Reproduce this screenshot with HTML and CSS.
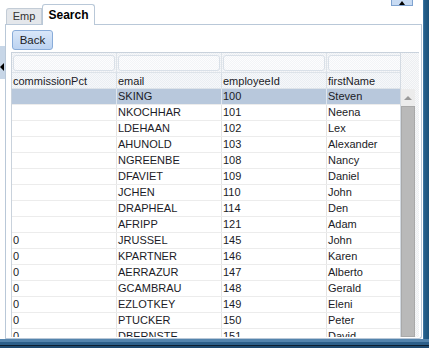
FILE: index.html
```html
<!DOCTYPE html>
<html>
<head>
<meta charset="utf-8">
<link rel="stylesheet" href="styles.css">
</head>
<body>
<div class="screen">
  <div class="top">
    <div class="main">
      <div class="collapse-top"><span class="tri-up"></span></div>
      <div class="collapse-left"><span class="tri-left"></span></div>
      <div class="tabbar">
        <div class="tab">Emp</div>
        <div class="tab active">Search</div>
      </div>
      <div class="panel">
        <button class="back">Back</button>
        <div class="grid">
          <div class="grid-body">
            <div class="row filter">
              <div class="cell"><div class="finput"></div></div>
              <div class="cell"><div class="finput"></div></div>
              <div class="cell"><div class="finput"></div></div>
              <div class="cell"><div class="finput"></div></div>
            </div>
            <div class="row header">
              <div class="cell">commissionPct</div>
              <div class="cell">email</div>
              <div class="cell">employeeId</div>
              <div class="cell">firstName</div>
            </div>
            <div class="row selected"><div class="cell"></div><div class="cell">SKING</div><div class="cell">100</div><div class="cell">Steven</div></div>
            <div class="row"><div class="cell"></div><div class="cell">NKOCHHAR</div><div class="cell">101</div><div class="cell">Neena</div></div>
            <div class="row"><div class="cell"></div><div class="cell">LDEHAAN</div><div class="cell">102</div><div class="cell">Lex</div></div>
            <div class="row"><div class="cell"></div><div class="cell">AHUNOLD</div><div class="cell">103</div><div class="cell">Alexander</div></div>
            <div class="row"><div class="cell"></div><div class="cell">NGREENBE</div><div class="cell">108</div><div class="cell">Nancy</div></div>
            <div class="row"><div class="cell"></div><div class="cell">DFAVIET</div><div class="cell">109</div><div class="cell">Daniel</div></div>
            <div class="row"><div class="cell"></div><div class="cell">JCHEN</div><div class="cell">110</div><div class="cell">John</div></div>
            <div class="row"><div class="cell"></div><div class="cell">DRAPHEAL</div><div class="cell">114</div><div class="cell">Den</div></div>
            <div class="row"><div class="cell"></div><div class="cell">AFRIPP</div><div class="cell">121</div><div class="cell">Adam</div></div>
            <div class="row"><div class="cell">0</div><div class="cell">JRUSSEL</div><div class="cell">145</div><div class="cell">John</div></div>
            <div class="row"><div class="cell">0</div><div class="cell">KPARTNER</div><div class="cell">146</div><div class="cell">Karen</div></div>
            <div class="row"><div class="cell">0</div><div class="cell">AERRAZUR</div><div class="cell">147</div><div class="cell">Alberto</div></div>
            <div class="row"><div class="cell">0</div><div class="cell">GCAMBRAU</div><div class="cell">148</div><div class="cell">Gerald</div></div>
            <div class="row"><div class="cell">0</div><div class="cell">EZLOTKEY</div><div class="cell">149</div><div class="cell">Eleni</div></div>
            <div class="row"><div class="cell">0</div><div class="cell">PTUCKER</div><div class="cell">150</div><div class="cell">Peter</div></div>
            <div class="row"><div class="cell">0</div><div class="cell">DBERNSTE</div><div class="cell">151</div><div class="cell">David</div></div>
          </div>
          <div class="vscroll">
            <div class="vs-head"></div>
            <div class="vs-arrow"><span class="vs-tri"></span></div>
            <div class="vs-thumb"></div>
          </div>
        </div>
      </div>
    </div>
    <div class="frame-right"></div>
  </div>
  <div class="frame-bottom"></div>
</div>
</body>
</html>
```
FILE: styles.css
```css
html, body {
  margin: 0;
  padding: 0;
  height: 100%;
  overflow: hidden;
  background: #ffffff;
}
body {
  font-family: "Liberation Sans", Arial, sans-serif;
  font-size: 11px;
  color: #1b1b26;
}
.screen {
  width: 429px;
  height: 348px;
  display: flex;
  flex-direction: column;
}
.top {
  display: flex;
  height: 339px;
}
.main {
  position: relative;
  width: 423px;
  display: flex;
  flex-direction: column;
}
.frame-right {
  width: 6px;
  background: linear-gradient(to right, #3a74a0 0 1px, #24608c 1px, #1b5078);
}
.frame-bottom {
  height: 9px;
  background: linear-gradient(#5484ad 0 3px, #2c5f8a 3px 6px, #0d1f30 6px 7px, #1f4a70 7px);
}

/* collapse handles */
.collapse-top {
  position: absolute;
  left: 391px;
  top: 0;
  width: 22px;
  height: 6px;
  box-sizing: border-box;
  background: #c8dbf3;
  border: 1px solid #7fa3d0;
  border-top: none;
  display: flex;
  justify-content: center;
  align-items: center;
}
.tri-up {
  width: 0;
  height: 0;
  border-left: 3px solid transparent;
  border-right: 3px solid transparent;
  border-bottom: 4px solid #000;
}
.collapse-left {
  position: absolute;
  left: 0;
  top: 46px;
  width: 5px;
  height: 33px;
  background: #c7d6e7;
  display: flex;
  align-items: center;
  justify-content: flex-start;
  padding-top: 9px;
  box-sizing: border-box;
}
.tri-left {
  width: 0;
  height: 0;
  border-top: 4px solid transparent;
  border-bottom: 4px solid transparent;
  border-right: 4px solid #000;
}

/* tabs */
.tabbar {
  height: 24px;
  margin-left: 5px;
  margin-right: 1px;
  border-bottom: 1px solid #b9c8d8;
  border-top-right-radius: 3px;
  display: flex;
  align-items: flex-end;
  padding-left: 1px;
}
.tab {
  box-sizing: border-box;
  width: 36px;
  height: 16px;
  line-height: 15px;
  text-align: center;
  background: #e4e7eb;
  border: 1px solid #c3ccd6;
  border-bottom: none;
  border-top-left-radius: 3px;
  color: #333;
}
.tab.active {
  width: 53px;
  height: 21px;
  line-height: 20px;
  margin-bottom: -1px;
  background: #ffffff;
  border-color: #b9c8d8;
  border-radius: 3px 3px 0 0;
  font-weight: bold;
  font-size: 12px;
  color: #000;
  position: relative;
}

/* panel */
.panel {
  flex: 1;
  min-height: 0;
  margin-left: 5px;
  margin-right: 1px;
  border: 1px solid #b9c8d8;
  border-top: none;
  border-bottom-right-radius: 3px;
  padding: 5px 0 1px 5px;
  display: flex;
  flex-direction: column;
  align-items: flex-start;
}
.back {
  box-sizing: border-box;
  width: 41px;
  height: 20px;
  margin: 0 0 0 1px;
  padding: 0;
  border: 1px solid #89acd9;
  border-radius: 3px;
  background: linear-gradient(#d9e7f9, #bcd3f1);
  font-family: "Liberation Sans", Arial, sans-serif;
  font-size: 11.5px;
  color: #1c1c1c;
  text-align: center;
}
.grid {
  margin-top: 2px;
  width: 408px;
  flex: 1;
  min-height: 0;
  overflow: hidden;
  border-left: 1px solid #c9d2dc;
  border-top: 1px solid #c9d2dc;
  box-sizing: border-box;
  display: flex;
}
.grid-body {
  width: 388px;
  overflow: hidden;
  flex: none;
}
.row {
  display: flex;
  height: 16px;
  box-sizing: border-box;
  border-bottom: 1px solid #ececec;
  width: 420px;
}
.cell {
  flex: 0 0 105px;
  box-sizing: border-box;
  border-right: 1px solid #e4e4e4;
  padding-left: 1px;
  line-height: 15px;
  white-space: nowrap;
  overflow: hidden;
}
.row.filter {
  height: 20px;
  border-bottom: 1px solid #dde3e9;
  background: repeating-conic-gradient(#eceff3 0 25%, #f7f8fa 0 50%) 0 0 / 2px 2px;
}
.row.filter .cell {
  border-right-color: #dde3e9;
  padding: 2px 1px 0 1px;
}
.finput {
  height: 16px;
  box-sizing: border-box;
  border: 1px solid #d9e0e8;
  border-radius: 3px;
  background: repeating-conic-gradient(#f2f4f7 0 25%, #fdfdfe 0 50%) 0 0 / 2px 2px;
}
.row.header {
  background: repeating-conic-gradient(#eaeef3 0 25%, #f6f8fa 0 50%) 0 0 / 2px 2px;
  border-bottom-color: #dde3e9;
}
.row.header .cell {
  border-right-color: #d7dee6;
  line-height: 17px;
}
.row.selected {
  background: #b8c8dc;
}
.row.selected .cell {
  border-right-color: #dfe6ee;
}

/* scrollbar */
.vscroll {
  flex: none;
  width: 19px;
  box-sizing: border-box;
  border-left: 1px solid #d3dae2;
  background: repeating-conic-gradient(#eceef1 0 25%, #f8f9fa 0 50%) 0 0 / 2px 2px;
  display: flex;
  flex-direction: column;
}
.vs-head {
  height: 36px;
  flex: none;
}
.vs-arrow {
  width: 14px;
  height: 17px;
  flex: none;
  background: #ececec;
  display: flex;
  justify-content: center;
  align-items: center;
}
.vs-tri {
  width: 0;
  height: 0;
  border-left: 4px solid transparent;
  border-right: 4px solid transparent;
  border-bottom: 4px solid #9a9a9a;
}
.vs-thumb {
  width: 14px;
  flex: 1;
  box-sizing: border-box;
  background: #b9b9b9;
  border: 1px solid #a9a9a9;
}
```
